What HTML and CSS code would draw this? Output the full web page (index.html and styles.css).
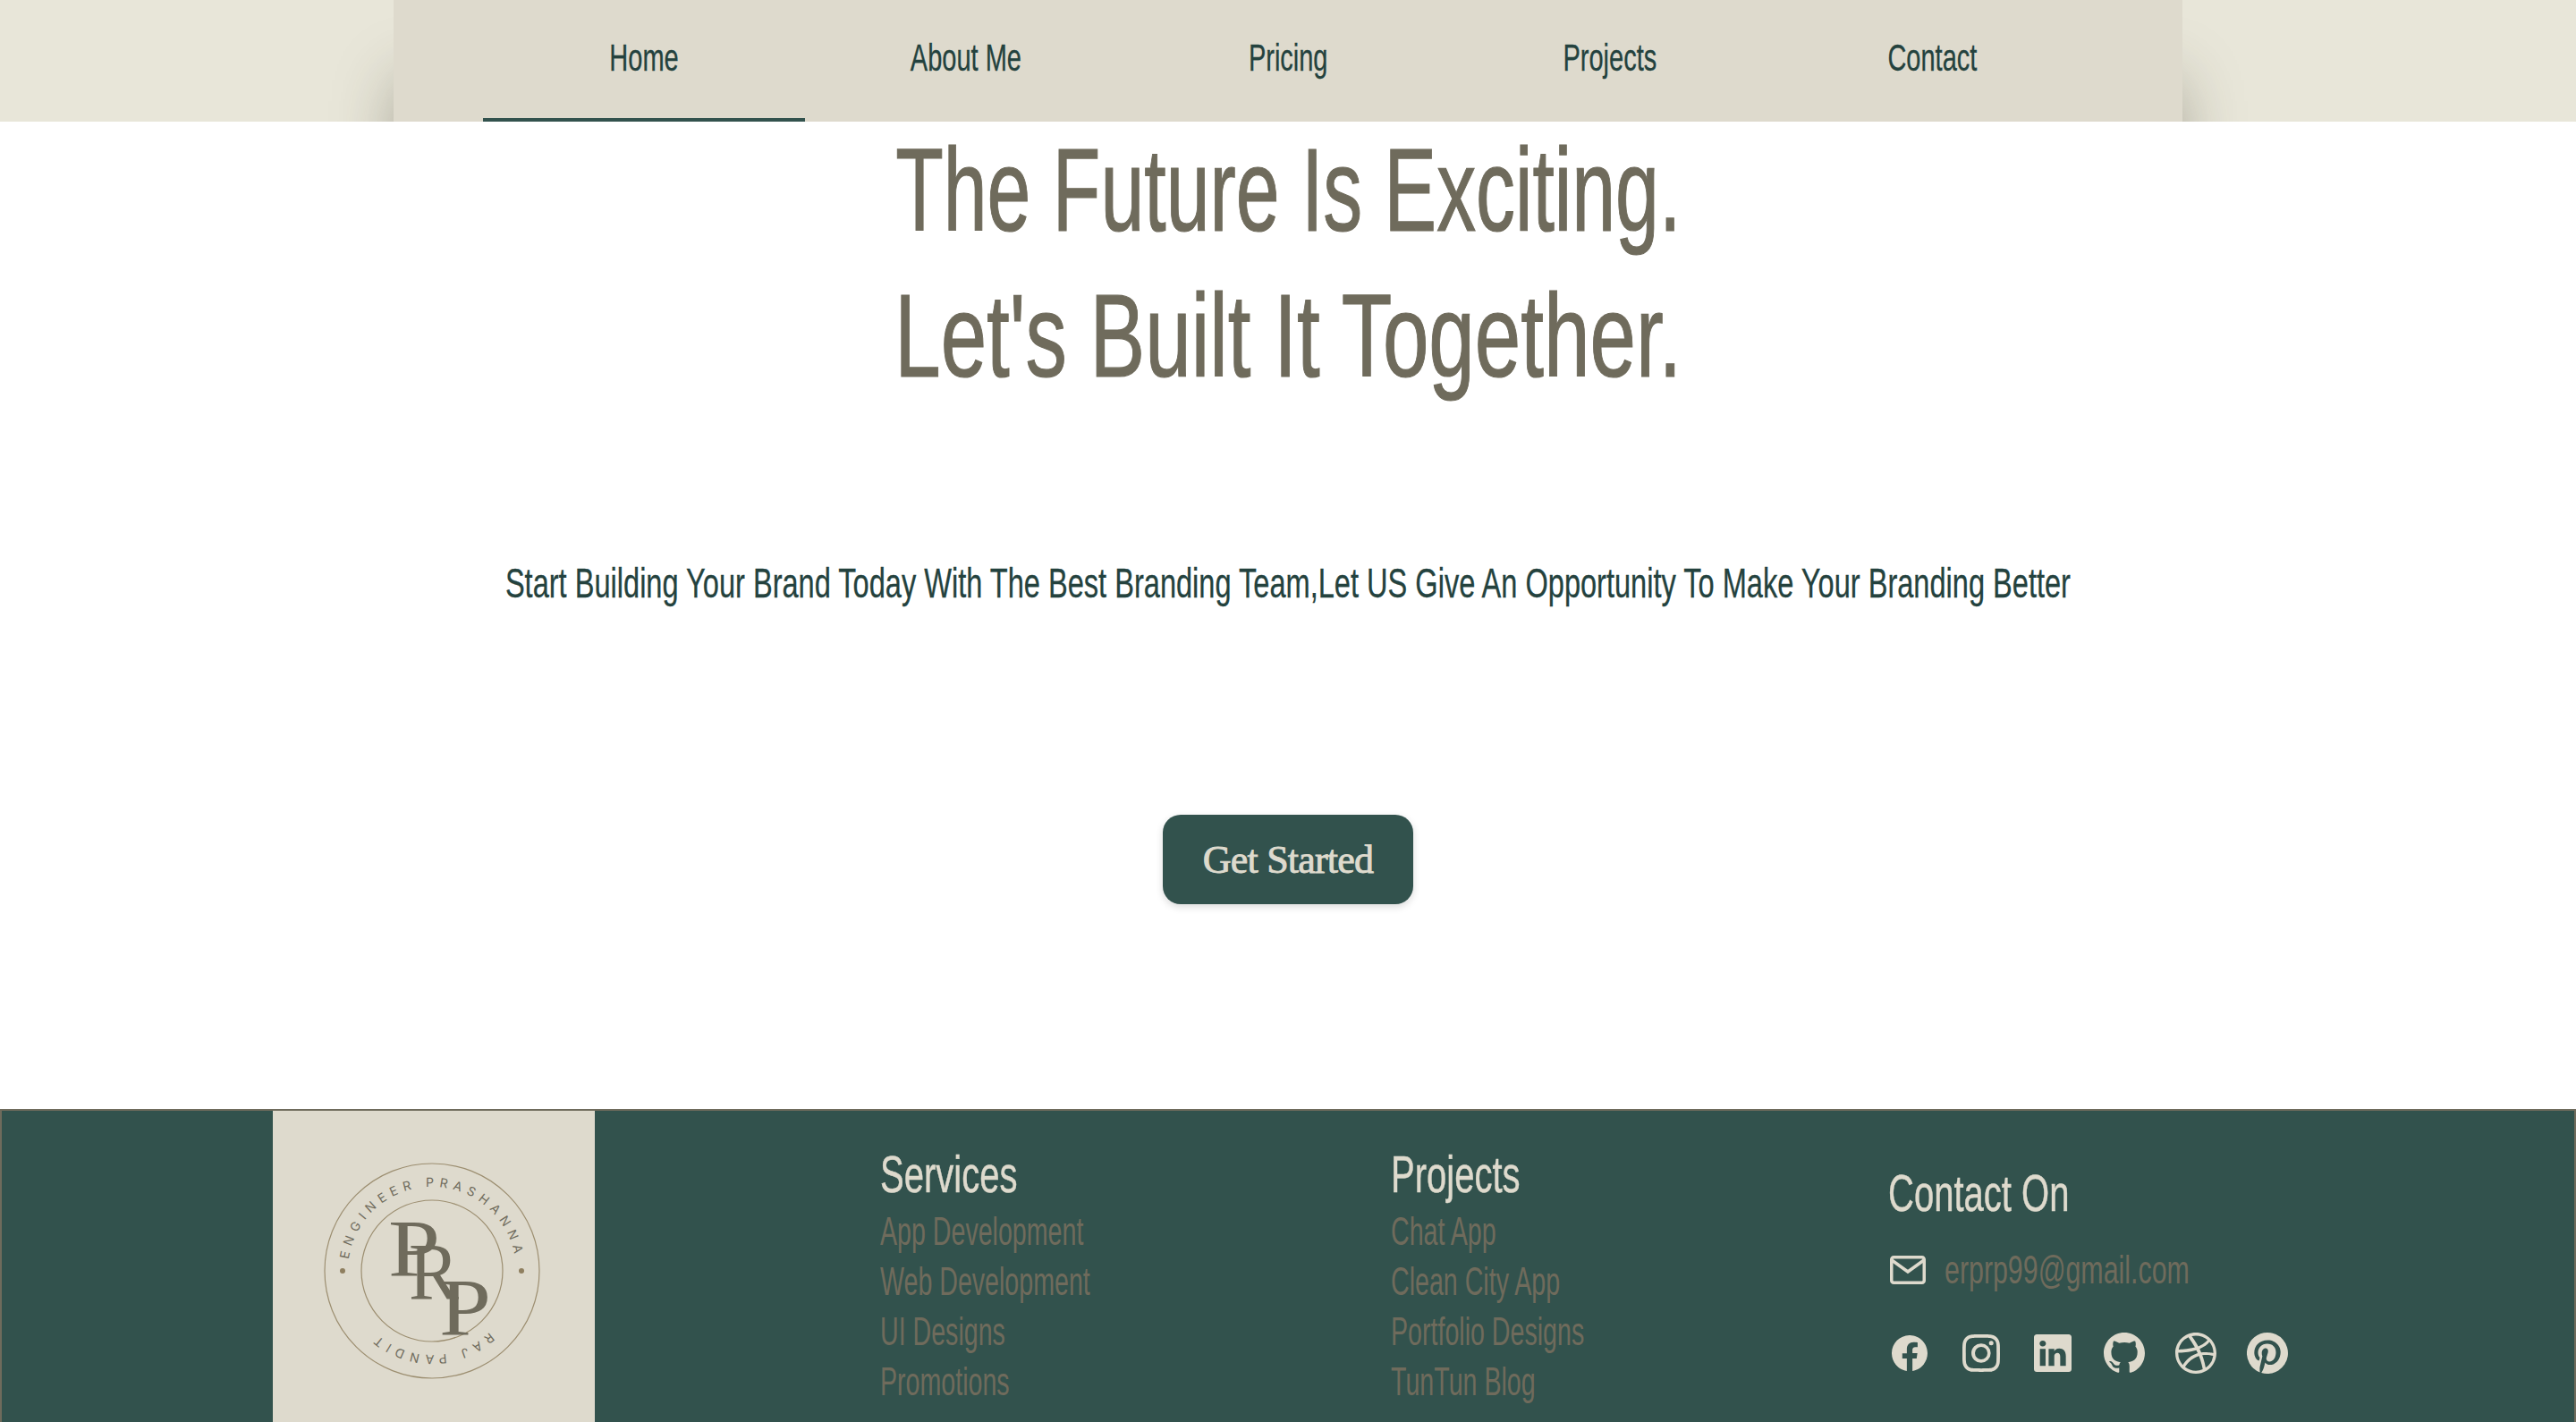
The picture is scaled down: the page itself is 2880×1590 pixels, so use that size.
FILE: index.html
```html
<!DOCTYPE html>
<html lang="en">
<head>
<meta charset="utf-8">
<title>Engineer Prashanna</title>
<link rel="stylesheet" href="styles.css">
</head>
<body>
<header class="header">
  <nav class="nav">
    <a class="nav-item active"><span class="nav-label">Home</span></a>
    <a class="nav-item"><span class="nav-label">About Me</span></a>
    <a class="nav-item"><span class="nav-label">Pricing</span></a>
    <a class="nav-item"><span class="nav-label">Projects</span></a>
    <a class="nav-item"><span class="nav-label">Contact</span></a>
  </nav>
</header>
<main class="hero">
  <h1 class="hero-title"><span class="hero-line line-a">The Future Is Exciting.</span><span class="hero-line line-b">Let's Built It Together.</span></h1>
  <p class="hero-sub">Start Building Your Brand Today With The Best Branding Team,Let US Give An Opportunity To Make Your Branding Better</p>
  <button class="cta"><span class="cta-label">Get Started</span></button>
</main>
<footer class="footer">
  <div class="logo-box">
    <svg class="logo" viewBox="0 0 360 348">
      <defs>
        <path id="arc-top" d="M84 179A94 94 0 0 1 272 179"/>
        <path id="arc-bottom" d="M272 179A94 94 0 0 1 84 179"/>
      </defs>
      <circle class="logo-ring" cx="178" cy="179" r="120"/>
      <circle class="logo-ring" cx="178" cy="179" r="79"/>
      <circle class="logo-dot" cx="78" cy="179" r="3"/>
      <circle class="logo-dot" cx="278" cy="179" r="3"/>
      <text class="logo-arc"><textPath href="#arc-top" startOffset="50%" text-anchor="middle">ENGINEER PRASHANNA</textPath></text>
      <text class="logo-arc"><textPath href="#arc-bottom" startOffset="50%" text-anchor="middle">RAJ PANDIT</textPath></text>
      <text class="logo-mono" x="129" y="185" textLength="58" lengthAdjust="spacingAndGlyphs">P</text>
      <text class="logo-mono" x="152" y="211" textLength="56" lengthAdjust="spacingAndGlyphs">R</text>
      <text class="logo-mono" x="186" y="251" textLength="58" lengthAdjust="spacingAndGlyphs">P</text>
    </svg>
  </div>
  <section class="links">
    <h2 class="links-title">Services</h2>
    <a class="link">App Development</a>
    <a class="link">Web Development</a>
    <a class="link">UI Designs</a>
    <a class="link">Promotions</a>
  </section>
  <section class="links">
    <h2 class="links-title">Projects</h2>
    <a class="link">Chat App</a>
    <a class="link">Clean City App</a>
    <a class="link">Portfolio Designs</a>
    <a class="link">TunTun Blog</a>
  </section>
  <section class="contact">
    <h2 class="links-title contact-title">Contact On</h2>
    <div class="mail">
      <svg class="mail-icon" viewBox="0 0 40 32"><rect x="1.75" y="1.75" width="36.5" height="28.5" rx="2.5"/><path d="M2 5l18 13L38 5"/></svg>
      <a class="link mail-text">erprp99@gmail.com</a>
    </div>
    <div class="socials">
      <svg class="soc s40" viewBox="0 0 16 16"><path d="M16 8.049c0-4.446-3.582-8.05-8-8.05C3.58 0-.002 3.603-.002 8.05c0 4.017 2.926 7.347 6.75 7.951v-5.625h-2.03V8.05H6.75V6.275c0-2.017 1.195-3.131 3.022-3.131.876 0 1.791.157 1.791.157v1.98h-1.009c-.993 0-1.303.621-1.303 1.258v1.51h2.218l-.354 2.326H9.25V16c3.824-.604 6.75-3.934 6.75-7.951z"/></svg>
      <svg class="soc s42" viewBox="0 0 16 16"><path d="M8 0C5.829 0 5.556.01 4.703.048 3.85.088 3.269.222 2.76.42a3.917 3.917 0 0 0-1.417.923A3.927 3.927 0 0 0 .42 2.76C.222 3.268.087 3.85.048 4.7.01 5.555 0 5.827 0 8.001c0 2.172.01 2.444.048 3.297.04.852.174 1.433.372 1.942.205.526.478.972.923 1.417.444.445.89.719 1.416.923.51.198 1.09.333 1.942.372C5.555 15.99 5.827 16 8 16s2.444-.01 3.298-.048c.851-.04 1.434-.174 1.943-.372a3.916 3.916 0 0 0 1.416-.923c.445-.445.718-.891.923-1.417.197-.509.332-1.09.372-1.942C15.99 10.445 16 10.173 16 8s-.01-2.445-.048-3.299c-.04-.851-.175-1.433-.372-1.941a3.926 3.926 0 0 0-.923-1.417A3.911 3.911 0 0 0 13.24.42c-.51-.198-1.092-.333-1.943-.372C10.443.01 10.172 0 7.998 0h.003zm-.717 1.442h.718c2.136 0 2.389.007 3.232.046.78.035 1.204.166 1.486.275.373.145.64.319.92.599.28.28.453.546.598.92.11.281.24.705.275 1.485.039.843.047 1.096.047 3.231s-.008 2.389-.047 3.232c-.035.78-.166 1.203-.275 1.485a2.47 2.47 0 0 1-.599.919c-.28.28-.546.453-.92.598-.28.11-.704.24-1.485.276-.843.038-1.096.047-3.232.047s-2.39-.009-3.233-.047c-.78-.036-1.203-.166-1.485-.276a2.478 2.478 0 0 1-.92-.598 2.48 2.48 0 0 1-.6-.92c-.109-.281-.24-.705-.275-1.485-.038-.843-.046-1.096-.046-3.233 0-2.136.008-2.388.046-3.231.036-.78.166-1.204.276-1.486.145-.373.319-.64.599-.92.28-.28.546-.453.92-.598.282-.11.705-.24 1.485-.276.738-.034 1.024-.044 2.515-.045v.002zm4.988 1.328a.96.96 0 1 0 0 1.92.96.96 0 0 0 0-1.92zm-4.27 1.122a4.109 4.109 0 1 0 0 8.217 4.109 4.109 0 0 0 0-8.217zm0 1.441a2.667 2.667 0 1 1 0 5.334 2.667 2.667 0 0 1 0-5.334z"/></svg>
      <svg class="soc s42" viewBox="0 0 16 16"><path d="M0 1.146C0 .513.526 0 1.175 0h13.65C15.474 0 16 .513 16 1.146v13.708c0 .633-.526 1.146-1.175 1.146H1.175C.526 16 0 15.487 0 14.854V1.146zm4.943 12.248V6.169H2.542v7.225h2.401zm-1.2-8.212c.837 0 1.358-.554 1.358-1.248-.015-.709-.52-1.248-1.342-1.248-.822 0-1.359.54-1.359 1.248 0 .694.521 1.248 1.327 1.248h.016zm4.908 8.212V9.359c0-.216.016-.432.08-.586.173-.431.568-.878 1.232-.878.869 0 1.216.662 1.216 1.634v3.865h2.401V9.25c0-2.22-1.184-3.252-2.764-3.252-1.274 0-1.845.7-2.165 1.193v.025h-.016a5.54 5.54 0 0 1 .016-.025V6.169h-2.4c.03.678 0 7.225 0 7.225h2.4z"/></svg>
      <svg class="soc s46" viewBox="0 0 16 16"><path d="M8 0C3.58 0 0 3.58 0 8c0 3.54 2.29 6.53 5.47 7.59.4.07.55-.17.55-.38 0-.19-.01-.82-.01-1.49-2.01.37-2.53-.49-2.69-.94-.09-.23-.48-.94-.82-1.13-.28-.15-.68-.52-.01-.53.63-.01 1.08.58 1.23.82.72 1.21 1.87.87 2.33.66.07-.52.28-.87.51-1.07-1.78-.2-3.64-.89-3.64-3.95 0-.87.31-1.59.82-2.15-.08-.2-.36-1.02.08-2.12 0 0 .67-.21 2.2.82.64-.18 1.32-.27 2-.27.68 0 1.36.09 2 .27 1.53-1.04 2.2-.82 2.2-.82.44 1.1.16 1.92.08 2.12.51.56.82 1.27.82 2.15 0 3.07-1.87 3.75-3.65 3.95.29.25.54.73.54 1.48 0 1.07-.01 1.93-.01 2.2 0 .21.15.46.55.38A8.012 8.012 0 0 0 16 8c0-4.42-3.58-8-8-8z"/></svg>
      <svg class="soc s46" viewBox="0 0 16 16"><path fill-rule="evenodd" d="M8 0C3.584 0 0 3.584 0 8s3.584 8 8 8c4.408 0 8-3.584 8-8s-3.592-8-8-8zm5.284 3.688a6.802 6.802 0 0 1 1.545 4.251c-.226-.043-2.482-.503-4.755-.217-.052-.112-.096-.234-.148-.355-.139-.33-.295-.668-.451-.99 2.516-1.023 3.662-2.498 3.81-2.69zM8 1.18c1.735 0 3.323.65 4.53 1.718-.122.174-1.155 1.553-3.584 2.464-1.12-2.056-2.36-3.74-2.551-4A6.95 6.95 0 0 1 8 1.18zm-2.907.642A43.123 43.123 0 0 1 7.627 5.77c-3.193.85-6.013.833-6.317.833a6.865 6.865 0 0 1 3.783-4.78zM1.163 8.01V7.8c.295.01 3.61.053 7.02-.971.199.381.381.772.555 1.162l-.27.078c-3.522 1.137-5.396 4.243-5.553 4.504a6.817 6.817 0 0 1-1.752-4.564zM8 14.837a6.785 6.785 0 0 1-4.19-1.44c.12-.252 1.509-2.924 5.361-4.269.018-.009.026-.009.044-.017a28.246 28.246 0 0 1 1.457 5.18A6.722 6.722 0 0 1 8 14.837zm3.81-1.171c-.07-.417-.435-2.412-1.328-4.868 2.143-.338 4.017.217 4.251.295a6.774 6.774 0 0 1-2.924 4.573z"/></svg>
      <svg class="soc s46" viewBox="0 0 16 16"><path d="M8 0a8 8 0 0 0-2.915 15.452c-.07-.633-.134-1.606.027-2.297.146-.625.938-3.977.938-3.977s-.239-.479-.239-1.187c0-1.113.645-1.943 1.448-1.943.682 0 1.012.512 1.012 1.127 0 .686-.437 1.712-.663 2.663-.188.796.4 1.446 1.185 1.446 1.422 0 2.515-1.5 2.515-3.664 0-1.915-1.377-3.254-3.342-3.254-2.276 0-3.612 1.707-3.612 3.471 0 .688.265 1.425.595 1.826a.24.24 0 0 1 .056.23c-.061.252-.196.796-.222.907-.035.146-.116.177-.268.107-1-.465-1.624-1.926-1.624-3.1 0-2.523 1.834-4.84 5.286-4.84 2.775 0 4.932 1.977 4.932 4.62 0 2.757-1.739 4.976-4.151 4.976-.811 0-1.573-.421-1.834-.919l-.498 1.902c-.181.695-.669 1.566-.995 2.097A8 8 0 1 0 8 0z"/></svg>
    </div>
  </section>
</footer>
</body>
</html>
```

FILE: styles.css
```css
* { box-sizing: border-box; }
html, body { margin: 0; padding: 0; }
body {
  width: 2880px;
  height: 1590px;
  overflow: hidden;
  background: #fff;
  font-family: "Liberation Sans Narrow", "Liberation Sans", sans-serif;
}
.header {
  height: 136px;
  background: #e8e6d9;
  display: flex;
  justify-content: center;
  overflow: hidden;
}
.nav {
  width: 2000px;
  height: 136px;
  padding: 0 100px;
  display: flex;
  background: #dedacd;
  box-shadow: 0 85px 70px -5px rgba(60, 58, 40, 0.4);
}
.nav-item {
  width: 360px;
  height: 136px;
  display: flex;
  align-items: center;
  justify-content: center;
  color: #24423e;
  font-size: 42px;
  padding-bottom: 6px;
}
.nav-item.active { border-bottom: 4px solid #32524d; padding-bottom: 2px; }
.nav-label { display: inline-block; transform: scaleX(0.69); white-space: nowrap; -webkit-text-stroke: 0.3px #24423e; }
.hero {
  height: 1104px;
  display: flex;
  flex-direction: column;
  align-items: center;
  overflow: hidden;
}
.hero-title {
  margin: -5px 0 5px;
  font-size: 132px;
  line-height: 163px;
  font-weight: 400;
  color: #6f6b5c;
  text-align: center;
  white-space: nowrap;
  -webkit-text-stroke: 1.2px #6f6b5c;
}
.hero-line { display: block; }
.line-a { transform: scaleX(0.665); }
.line-b { transform: scaleX(0.701); }
.hero-sub {
  margin: 163px 0 0;
  font-size: 46px;
  line-height: 54px;
  color: #24423e;
  white-space: nowrap;
  transform: scaleX(0.708);
  -webkit-text-stroke: 0.3px #24423e;
}
.cta {
  margin-top: 232px;
  width: 280px;
  height: 100px;
  border: 0;
  border-radius: 20px;
  background: #32524d;
  color: #dedacd;
  font-family: "Liberation Serif", serif;
  font-size: 44px;
  font-weight: 400;
  box-shadow: 0 3px 8px rgba(0, 0, 0, 0.15);
}
.cta-label { display: inline-block; letter-spacing: -0.8px; -webkit-text-stroke: 0.9px #dedacd; }
.footer {
  height: 350px;
  background: #32524d;
  border: 2px solid #6f6b5c;
  border-bottom: 0;
  padding-left: 303px;
  display: grid;
  grid-template-columns: 679px 571px 556px 1fr;
  overflow: hidden;
}
.logo-box { width: 360px; height: 348px; background: #dedacd; }
.logo { display: block; width: 360px; height: 348px; }
.logo-ring { fill: none; stroke: #9c8e70; stroke-width: 1.2; }
.logo-dot { fill: #8f7f5f; }
.logo-arc { font-family: "Inter", sans-serif; font-size: 14px; letter-spacing: 6px; fill: #6f6b5c; }
.logo-mono { font-family: "Liberation Serif", serif; font-size: 92px; fill: #6f6b5c; }
.links { padding-top: 43px; display: flex; flex-direction: column; align-items: flex-start; }
.links-title {
  margin: 0;
  height: 56px;
  line-height: 56px;
  font-size: 58px;
  font-weight: 400;
  color: #dedacd;
  white-space: nowrap;
  transform: scaleX(0.69);
  transform-origin: left center;
  -webkit-text-stroke: 0.5px #dedacd;
}
.link {
  display: block;
  height: 56px;
  line-height: 56px;
  font-size: 44px;
  color: #6f6b5c;
  white-space: nowrap;
  transform: scaleX(0.65);
  transform-origin: left center;
}
.links .links-title { margin-bottom: 8px; }
.contact { padding-top: 64px; display: flex; flex-direction: column; align-items: flex-start; }
.contact-title { transform: scaleX(0.69); }
.mail { margin-top: 30px; display: flex; align-items: center; gap: 21px; padding-left: 2px; }
.mail-icon { width: 40px; height: 32px; fill: none; stroke: #dedacd; stroke-width: 3.5; }
.mail-text { font-size: 44px; transform: scaleX(0.69); }
.socials { margin-top: 42px; display: grid; grid-template-columns: repeat(6, 80px); align-items: center; justify-items: center; margin-left: -16px; }
.soc { fill: #dedacd; display: block; }
.s40 { width: 40px; height: 40px; }
.s42 { width: 42px; height: 42px; }
.s46 { width: 46px; height: 46px; }
```
